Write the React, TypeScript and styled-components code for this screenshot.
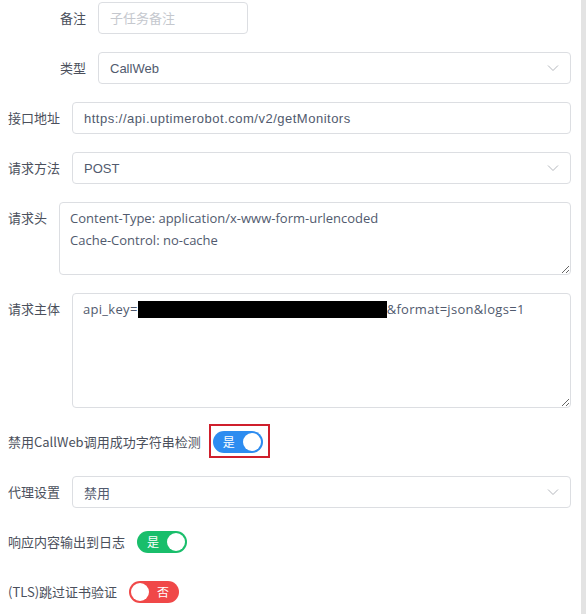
import React from "react";
import styled, { createGlobalStyle } from "styled-components";

const GlobalStyle = createGlobalStyle`
  html, body {
    margin: 0;
    padding: 0;
    background: #ffffff;
    overflow: hidden;
  }
  * { box-sizing: border-box; }
`;

const Page = styled.div`
  display: flex;
  height: 614px;
  overflow: hidden;
  font-family: "Liberation Sans", "Noto Sans CJK SC", sans-serif;
`;

const Form = styled.div`
  flex: 1;
  padding: 2px 10px 0 8px;
`;

const ScrollTrack = styled.div`
  flex: 0 0 5px;
  background: #e3e3e3;
`;

const FormItem = styled.div<{ $top?: boolean }>`
  display: flex;
  align-items: ${(p) => (p.$top ? "flex-start" : "center")};
  min-height: 32px;
  margin-bottom: 18px;
`;

const Label = styled.label<{ $width?: number }>`
  flex: none;
  width: ${(p) => (p.$width ? `${p.$width}px` : "auto")};
  text-align: right;
  padding-right: 12px;
  line-height: 32px;
  font-family: "Noto Sans CJK SC", sans-serif;
  font-size: 13px;
  color: #4b505c;
  white-space: nowrap;
`;

const Input = styled.input<{ $width?: number; $spread?: number }>`
  flex: ${(p) => (p.$width ? `0 0 ${p.$width}px` : "1 1 auto")};
  min-width: 0;
  height: 32px;
  padding: 0 11px;
  border: 1px solid #dcdee2;
  border-radius: 4px;
  font-family: "Liberation Sans", "Noto Sans CJK SC", sans-serif;
  font-size: 13px;
  letter-spacing: ${(p) => (p.$spread ? `${p.$spread}px` : "normal")};
  color: #515a6e;
  background: #fff;
  outline: none;
  &::placeholder {
    color: #c5c8ce;
  }
`;

const Select = styled.div`
  flex: 1 1 auto;
  display: flex;
  align-items: center;
  justify-content: space-between;
  height: 32px;
  padding: 0 11px 0 11px;
  border: 1px solid #dcdee2;
  border-radius: 4px;
  font-size: 13px;
  color: #515a6e;
  background: #fff;
`;

const TextArea = styled.textarea<{ $height: number }>`
  flex: 1 1 auto;
  height: ${(p) => p.$height}px;
  padding: 4px 10px;
  border: 1px solid #dcdee2;
  border-radius: 4px;
  font-family: "Open Sans", "Noto Sans CJK SC", sans-serif;
  font-size: 13px;
  line-height: 22px;
  color: #515a6e;
  resize: vertical;
  outline: none;
  overflow: hidden;
  background: #fff;
`;

const TextBox = styled.div<{ $height: number; $spread?: number }>`
  flex: 1 1 auto;
  height: ${(p) => p.$height}px;
  padding: 4px 10px;
  border: 1px solid #dcdee2;
  border-radius: 4px;
  font-family: "Open Sans", "Noto Sans CJK SC", sans-serif;
  font-size: 13px;
  line-height: 22px;
  letter-spacing: ${(p) => (p.$spread ? `${p.$spread}px` : "normal")};
  color: #515a6e;
  resize: vertical;
  overflow: hidden;
  background: #fff;
  white-space: nowrap;
`;

const Redacted = styled.span`
  display: inline-block;
  width: 249px;
  height: 17px;
  background: #000;
  vertical-align: middle;
  margin-top: -3px;
`;

const SwitchWrap = styled.span`
  position: relative;
  display: inline-flex;
`;

const Annotation = styled.span`
  position: absolute;
  left: -4px;
  top: -7px;
  width: 61px;
  height: 34px;
  border: 2px solid #cf1f2c;
  pointer-events: none;
`;

const SwitchTrack = styled.span<{ $on: boolean; $color: string }>`
  display: inline-flex;
  flex-direction: ${(p) => (p.$on ? "row" : "row-reverse")};
  align-items: center;
  width: 50px;
  height: 22px;
  padding: 2px;
  border-radius: 11px;
  background: ${(p) => p.$color};
`;

const SwitchText = styled.span`
  flex: 1;
  text-align: center;
  font-family: "Noto Sans CJK SC", sans-serif;
  font-size: 12px;
  line-height: 18px;
  color: #fff;
`;

const Knob = styled.span`
  flex: 0 0 18px;
  height: 18px;
  border-radius: 50%;
  background: #fff;
`;

const Chevron = () => (
  <svg width="12" height="8" viewBox="0 0 12 8" fill="none">
    <polyline points="1,1.5 6,6.5 11,1.5" stroke="#b4b7bd" strokeWidth="1" />
  </svg>
);

const Switch = ({ on, color, text }: { on: boolean; color: string; text: string }) => (
  <SwitchTrack $on={on} $color={color}>
    <SwitchText>{text}</SwitchText>
    <Knob />
  </SwitchTrack>
);

export default function App() {
  return (
    <Page>
      <GlobalStyle />
      <Form>
        <FormItem>
          <Label $width={90}>备注</Label>
          <Input $width={150} placeholder="子任务备注" readOnly />
        </FormItem>
        <FormItem>
          <Label $width={90}>类型</Label>
          <Select>
            <span>CallWeb</span>
            <Chevron />
          </Select>
        </FormItem>
        <FormItem>
          <Label>接口地址</Label>
          <Input $spread={0.5} defaultValue="https://api.uptimerobot.com/v2/getMonitors" readOnly />
        </FormItem>
        <FormItem>
          <Label>请求方法</Label>
          <Select>
            <span>POST</span>
            <Chevron />
          </Select>
        </FormItem>
        <FormItem $top>
          <Label>请求头</Label>
          <TextArea
            $height={73}
            readOnly
            defaultValue={"Content-Type: application/x-www-form-urlencoded\nCache-Control: no-cache"}
          />
        </FormItem>
        <FormItem $top>
          <Label>请求主体</Label>
          <TextBox $height={115} $spread={0.3}>
            api_key=<Redacted />&amp;format=json&amp;logs=1
          </TextBox>
        </FormItem>
        <FormItem>
          <Label>禁用CallWeb调用成功字符串检测</Label>
          <SwitchWrap>
            <Switch on color="#2d8cf0" text="是" />
            <Annotation />
          </SwitchWrap>
        </FormItem>
        <FormItem>
          <Label>代理设置</Label>
          <Select>
            <span>禁用</span>
            <Chevron />
          </Select>
        </FormItem>
        <FormItem>
          <Label>响应内容输出到日志</Label>
          <Switch on color="#19be6b" text="是" />
        </FormItem>
        <FormItem>
          <Label>(TLS)跳过证书验证</Label>
          <Switch on={false} color="#f04848" text="否" />
        </FormItem>
      </Form>
      <ScrollTrack />
    </Page>
  );
}
